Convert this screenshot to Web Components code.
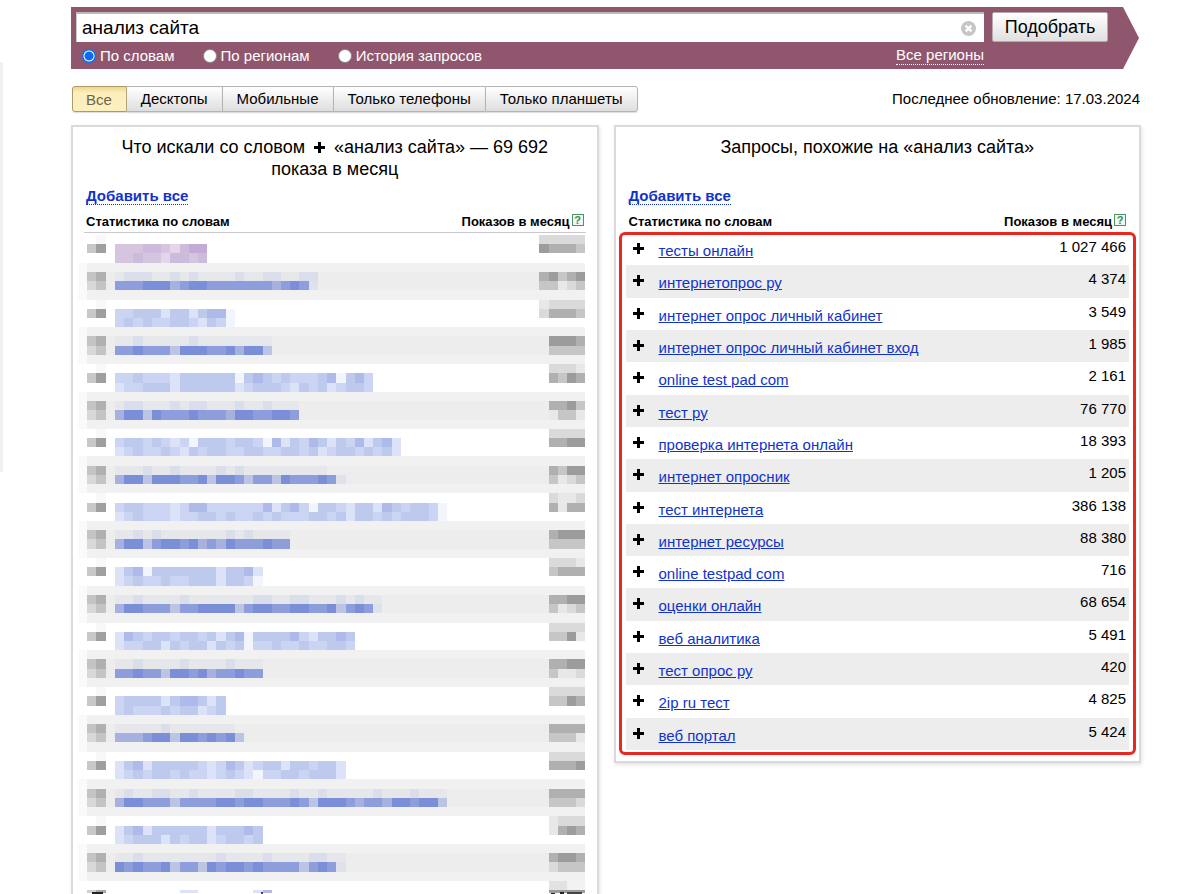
<!DOCTYPE html>
<html lang="ru">
<head>
<meta charset="utf-8">
<title>Подбор слов</title>
<style>
  html, body { margin: 0; background: #fff; }
  body { font: 15px/18px "Liberation Sans", Arial, sans-serif; color: #000; }
</style>
</head>
<body>
<wordstat-app></wordstat-app>

<script>
const define = (name, html, setup) => customElements.define(name, class extends HTMLElement {
  constructor() {
    super();
    this.attachShadow({ mode: 'open' }).innerHTML = html;
  }
  connectedCallback() {
    if (setup && !this.ready) { this.ready = true; setup(this, this.shadowRoot); }
  }
});

define('plus-icon', `
  <style>:host { display: inline-block; width: 11px; height: 11px; } svg { display: block; width: 100%; height: 100%; }</style>
  <svg viewBox="0 0 11 11" aria-hidden="true"><path d="M4 0h3v4h4v3H7v4H4V7H0V4h4z"/></svg>`);

define('help-icon', `
  <style>
    :host { display: inline-block; }
    a { display: block; box-sizing: border-box; width: 12px; height: 12px; border: 1px solid #4f9364; background: #eef7f0;
        color: #3f8a57; font: bold 11px/10px "Liberation Sans", Arial, sans-serif; text-align: center; text-decoration: none; }
  </style>
  <a href="#help">?</a>`);

define('search-bar', `
  <style>
    :host { display: block; }
    form { display: grid; grid-template-columns: 1fr 116px; column-gap: 8px; box-sizing: border-box; height: 62px;
      padding: 5px 31px 0 5px; background: #90566e;
      clip-path: polygon(0 0, calc(100% - 16px) 0, 100% 50%, calc(100% - 16px) 100%, 0 100%); }
    .field { display: flex; align-items: center; height: 30px; box-sizing: border-box; background: #fff;
      border-top: 2px solid #b9b9b9; border-left: 1px solid #c9c9c9; padding: 0 8px 0 5px; }
    input[type=text] { flex: 1; min-width: 0; border: 0; outline: 0; padding: 0; background: none; font: 19px/24px "Liberation Sans", Arial, sans-serif; color: #000; }
    .clear { border: 0; padding: 0; background: none; width: 15px; height: 15px; }
    .clear svg { display: block; }
    .go { height: 30px; border: 1px solid #b5a9ae; border-radius: 2px; padding: 0; color: #000;
      background: linear-gradient(#fff, #e0e0e0); font: 18px/24px "Liberation Sans", Arial, sans-serif; }
    .opts { display: flex; justify-content: space-between; color: #fff; padding: 1px 0 0 6px; }
    .radios { display: flex; gap: 28px; }
    label { display: flex; align-items: center; gap: 4px; height: 20px; }
    input[type=radio] { appearance: none; box-sizing: border-box; width: 14px; height: 14px; margin: 0; border-radius: 50%; background: #fff; border: 1px solid #8a8a8a; }
    input[type=radio]:checked { border: 0; background: radial-gradient(circle closest-side, #0a6cf5 4px, #fff 5px, #fff 5px, #0a6cf5 6px); }
    .region { color: #fff; text-decoration: none; border-bottom: 1px dotted #fff; line-height: 18px; height: 18px; }
  </style>
  <form>
    <div class="field">
      <input type="text" aria-label="Запрос" value="анализ сайта">
      <button type="button" class="clear" aria-label="Очистить"><svg width="15" height="15" viewBox="0 0 15 15"><circle cx="7.5" cy="7.5" r="7.5" fill="#c6c6c6"/><path d="M4.6 4.6l5.8 5.8M10.4 4.6l-5.8 5.8" stroke="#fff" stroke-width="2.4"/></svg></button>
    </div>
    <button type="button" class="go">Подобрать</button>
    <div class="opts">
      <div class="radios">
        <label><input type="radio" name="m" checked>По словам</label>
        <label><input type="radio" name="m">По регионам</label>
        <label><input type="radio" name="m">История запросов</label>
      </div>
      <a class="region" href="#regions">Все регионы</a>
    </div>
  </form>`);

define('device-tabs', `
  <style>
    :host { display: flex; }
    button { height: 26px; margin: 0; padding: 0 14px; border: 1px solid #b4b4b4; border-right-width: 0; color: #000;
      background: linear-gradient(#fff, #dedede); font: 15px/22px "Liberation Sans", Arial, sans-serif; box-shadow: 0 1px 1px #ddd; }
    button:first-of-type { color: #6e6648; background: linear-gradient(#f0d68c, #fdeebb 6px, #fdf0bf); border-color: #a99a68; border-radius: 3px 0 0 3px; border-right-width: 1px; padding: 2px 14px 0 13px; }
    button:nth-of-type(2) { border-left: 0; }
    button:last-of-type { border-right-width: 1px; border-radius: 0 3px 3px 0; }
  </style>
  <button>Все</button><button>Десктопы</button><button>Мобильные</button><button>Только телефоны</button><button>Только планшеты</button>`);

define('stat-panel', `
  <style>
    :host { display: block; box-sizing: border-box; border: 2px solid #dadada; box-shadow: 1px 2px 4px #e4e4e4; padding: 9px 12px 0; background: #fff; }
    h2 { margin: 0; min-height: 44px; padding: 0 30px; font: 18px/22px "Liberation Sans", Arial, sans-serif; text-align: center; }
    .add { display: inline-block; margin: 7px 0 0 1px; color: #1133cc; font-weight: bold; text-decoration: none; border-bottom: 1px dotted #1133cc; line-height: 17px; }
    .head { display: flex; justify-content: space-between; font: bold 13px/16px "Liberation Sans", Arial, sans-serif; margin-top: 9px; padding: 0 1px 2px; }
    .head span { display: flex; align-items: flex-start; gap: 2px; }
  </style>
  <h2><slot name="title"></slot></h2>
  <a class="add" href="#add">Добавить все</a>
  <div class="head"><span>Статистика по словам</span><span>Показов в месяц<help-icon></help-icon></span></div>
  <slot></slot>`);

const QUERIES = [
  ['тесты онлайн', '1 027 466'], ['интернетопрос ру', '4 374'], ['интернет опрос личный кабинет', '3 549'],
  ['интернет опрос личный кабинет вход', '1 985'], ['online test pad com', '2 161'], ['тест ру', '76 770'],
  ['проверка интернета онлайн', '18 393'], ['интернет опросник', '1 205'], ['тест интернета', '386 138'],
  ['интернет ресурсы', '88 380'], ['online testpad com', '716'], ['оценки онлайн', '68 654'],
  ['веб аналитика', '5 491'], ['тест опрос ру', '420'], ['2ip ru тест', '4 825'], ['веб портал', '5 424']
];

define('query-table', `
  <style>
    :host { display: block; position: relative; margin: 0 -2px 11px; padding-top: 1px; }
    :host::after { content: ""; position: absolute; inset: 0 -7px -5px; border: 3px solid #e8291f; border-radius: 6px; pointer-events: none; }
    table { width: 100%; height: 517px; border-collapse: collapse; }
    tr:nth-child(even) { background: #ededed; }
    td { padding: 0; vertical-align: top; }
    .p { width: 33px; padding: 10px 0 0 7px; box-sizing: border-box; line-height: 0; }
    .q { padding-top: 9px; }
    .n { padding: 5px 3px 0 0; text-align: right; }
    a { color: #1133cc; text-decoration: underline; }
  </style>
  <table><tbody></tbody></table>`, (el, root) => {
  root.querySelector('tbody').innerHTML = QUERIES.map(([q, n]) =>
    `<tr><td class="p"><plus-icon></plus-icon></td><td class="q"><a href="#q">${q}</a></td><td class="n">${n}</td></tr>`).join('');
});

/* Hidden rows: each line is drawn as two rows of cells, digits 0-5 give the strength of a cell. */
const LINES = [
  ['3334432455', '3343324434', '22222', '54443', '4445553455444444434541', '1222112121111211221122', '45345', '33123'],
  ['3344424424551', '3434334432431', '12222', '24443', '44544425554453552', '11211111211111111', '5554', '3333'],
  ['3343332444444145434333451453', '2334442444444234443243423443', '2221', '4354', '35525444544435544554', '12211121221112112111', '4453', '1331'],
  ['3443432314443443152435424352452', '2343343243443344334434234434342', '2222', '4455', '3552555445255424425444541', '1112112111121211111111100', '4355', '3123'],
  ['344333235533333352453144324425434431', '234333233443433434333443424434344431', '2112', '4144', '3552455453435444544', '1121211111112121111', '4555', '3333'],
  ['2451444444424452', '2343343344424431', '2221', '3444', '35544424455552455445544524541', '11211112111111122112211121211', '4455', '3123'],
  ['25434434434245144445324454', '23344243442434133433433443', '2222', '3351', '4454425545344544', '1121111211112111', '4455', '3112'],
  ['344442455424', '343334344234', '2222', '3354', '33345525545452', '11111211111110', '4444', '3331'],
  ['2452444443235423442443442', '2343443433234321334434442', '2222', '4445', '355444244445545544454255543443554552', '121122112111122111121121111121112111', '4444', '3332'],
  ['2452444444244454', '2344424344234434', '1222', '1454', '5454452442545545444424541', '1121111111121111211112211', '4554', '2333']
];
const BLUE = ['none', '#f3f5fd', '#dce2f8', '#cbd4f2', '#bec9ee', '#aebaea'];
const PINK = ['none', '#f6eff8', '#e4d5ea', '#d6c5df', '#cdbbdc', '#c2acd5'];
const DARK = ['none', '#dfe1eb', '#bcc4e3', '#a6b1df', '#8e9ddb', '#7b8ed8'];
const FAINT = ['none', '#e6e7eb', '#dadeea'];
const GREY = ['none', '#e8e8e8', '#dadada', '#c6c6c6', '#b0b0b0', '#9c9c9c'];

define('masked-rows', `
  <style>
    :host { display: block; border-top: 1px solid #c9c9cf; margin: 0 -1px; padding: 2px 1px 0 0; }
    svg { display: block; width: calc(100% + 7px); margin-left: -6px; shape-rendering: crispEdges; }
  </style>
  <svg viewBox="0 0 55 73" aria-hidden="true"></svg>`, (el, root) => {
  let out = '';
  const rect = (x, y, w, h, fill) => { if (fill !== 'none') out += `<rect x="${x}" y="${y}" width="${w}" height="${h}" fill="${fill}"/>`; };
  const cells = (s, x, y, pal) => [...s].forEach((d, i) => rect(x + i, y, 1, 1, pal[d]));
  LINES.forEach(([a, b, c, d, e, f, g, h], i) => {
    const y = i * 7, pal = i ? BLUE : PINK;
    rect(2, y, 1, 1, '#f8f8f8');
    rect(1, y + 1, 1, 1, '#c8c8c8'); rect(2, y + 1, 1, 1, '#9f9f9f');
    cells(a, 4, y + 1, pal); cells(b, 4, y + 2, pal);
    cells(c, 55 - c.length, y, GREY); cells(d, 55 - d.length, y + 1, GREY);
    rect(0, y + 3, 1, 4, '#fafafa'); rect(1, y + 3, 54, 4, '#f1f1f1'); rect(3, y + 4, 51, 2, '#ededed');
    rect(1, y + 4, 1, 1, '#c4c4c4'); rect(2, y + 4, 1, 1, '#b0b0b0');
    rect(1, y + 5, 1, 1, '#d8d8d8'); rect(2, y + 5, 1, 1, '#c4c4c4');
    cells(f, 4, y + 4, FAINT); cells(e, 4, y + 5, DARK);
    cells(g, 55 - g.length, y + 4, GREY); cells(h, 55 - h.length, y + 5, GREY);
  });
  rect(51, 70, 2, 1, '#e2e2e2'); rect(53, 70, 2, 1, '#f2f2f2');
  rect(1, 71, 1, .3, '#d0d0d0'); rect(2, 71, 1, .3, '#a8a8a8'); rect(1.5, 71.2, 1.2, .3, '#222');
  rect(11, 71, 2, .3, '#dce2f8'); rect(19, 71, 1, .3, '#dce2f8'); rect(20, 71, 1, .3, '#aebaea'); rect(19.8, 71.2, .3, .3, '#445');
  rect(51, 71, 4, .3, '#9c9c9c'); rect(51.3, 71.3, .4, .2, '#222'); rect(52.2, 71.2, .5, .3, '#222'); rect(53, 71.2, 1.6, .2, '#444');
  root.querySelector('svg').innerHTML = out;
});

define('wordstat-app', `
  <style>
    :host { display: block; position: relative; box-sizing: border-box; height: 100vh; overflow: hidden; padding: 7px 59px 0 71px; }
    .edge { position: absolute; left: 0; top: 62px; width: 3px; height: 410px; background: #f1f1f1; }
    search-bar { margin-right: 2px; }
    .bar { display: flex; justify-content: space-between; align-items: center; margin: 17px 1px 0; }
    .panels { display: grid; grid-template-columns: 1fr 1fr; gap: 15px; align-items: start; margin: 13px 0 0; }
    plus-icon { margin: 0 4px; }
  </style>
  <div class="edge"></div>
  <search-bar></search-bar>
  <div class="bar"><device-tabs></device-tabs><span>Последнее обновление: 17.03.2024</span></div>
  <div class="panels">
    <stat-panel><span slot="title">Что искали со словом <plus-icon></plus-icon> «анализ сайта» — 69&nbsp;692<br>показа в месяц</span><masked-rows></masked-rows></stat-panel>
    <stat-panel><span slot="title">Запросы, похожие на «анализ сайта»</span><query-table></query-table></stat-panel>
  </div>`);
</script>
</body>
</html>
